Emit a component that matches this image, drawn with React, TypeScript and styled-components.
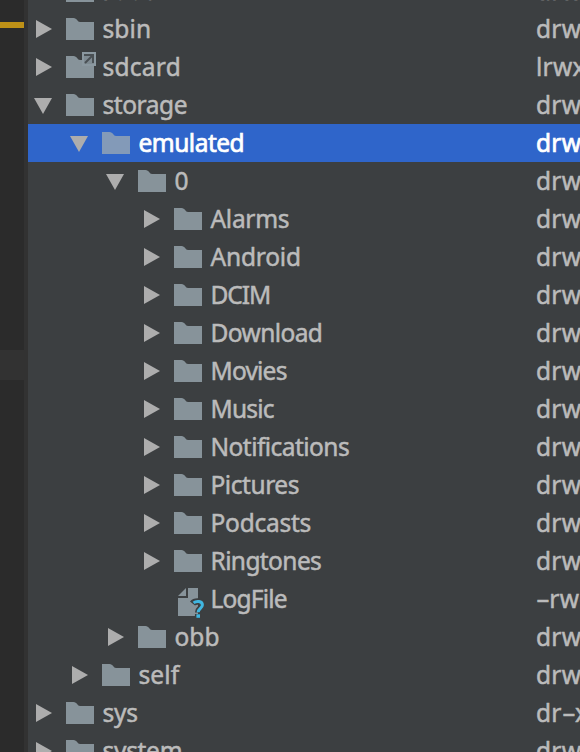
import React from 'react';
import styled, { createGlobalStyle } from 'styled-components';

const GlobalStyle = createGlobalStyle`
  html, body, #root { margin: 0; padding: 0; height: 100%; background: #3c3f41; }
  body { overflow: hidden; }
`;

const Window = styled.div`
  display: flex;
  width: 580px;
  height: 752px;
  overflow: hidden;
  background: #3c3f41;
  color: #bbbbbb;
  font: 400 24.5px/38px 'Noto Sans', 'Open Sans', sans-serif;
`;

const Gutter = styled.div`
  flex: none;
  display: flex;
  flex-direction: column;
  width: 24px;
  background: #2b2b2b;
  border-right: 4px solid #323232;
`;

const WarningMark = styled.div`
  height: 6px;
  margin-top: 22px;
  background: #be9117;
`;

const CaretLine = styled.div`
  height: 30px;
  margin-top: 322px;
  background: #323232;
`;

const Tree = styled.div`
  flex: 1;
  min-width: 0;
  margin-top: -28px;
`;

const Row = styled.div<{ $selected: boolean }>`
  display: grid;
  grid-template-columns: 508px 1fr;
  height: 38px;
  white-space: pre;
  overflow: hidden;
  background: ${(p) => (p.$selected ? '#2f65ca' : 'transparent')};
  color: ${(p) => (p.$selected ? '#ffffff' : '#bbbbbb')};
  -webkit-text-stroke: ${(p) => (p.$selected ? '0.7px' : '0.5px')} currentColor;
`;

const NameCell = styled.div<{ $level: number }>`
  display: flex;
  padding-left: ${(p) => 6 + p.$level * 36}px;
`;

const Toggle = styled.svg`
  flex: none;
  width: 18px;
  height: 38px;
  margin-right: 14px;
  fill: #adadad;
`;

const Icon = styled.svg<{ $selected?: boolean }>`
  flex: none;
  width: 32px;
  height: 38px;
  margin-right: 4.5px;
  fill: ${(p) => (p.$selected ? '#839ab8' : '#87939a')};
`;

const Label = styled.span<{ $spacing: number }>`
  letter-spacing: ${(p) => p.$spacing}px;
`;

const Permissions = styled.span`
  letter-spacing: 0.3px;
`;

const Dash = styled.span`
  display: inline-block;
  width: 13.3px;
  transform: scaleX(1.75);
  transform-origin: left;
`;

type Kind = 'folder' | 'link' | 'file';
type Entry = {
  name: string;
  level: number;
  perms: string;
  spacing?: number;
  open?: boolean;
  selected?: boolean;
  kind?: Kind;
};

const D = 'drwx';
const entries: Entry[] = [
  { name: 'root', level: 0, perms: D, spacing: 0.6 },
  { name: 'sbin', level: 0, perms: D, spacing: 0.1 },
  { name: 'sdcard', level: 0, perms: 'lrwx', kind: 'link', spacing: 0.25 },
  { name: 'storage', level: 0, perms: D, open: true, spacing: -0.45 },
  { name: 'emulated', level: 1, perms: D, open: true, selected: true, spacing: -0.5 },
  { name: '0', level: 2, perms: D, open: true },
  { name: 'Alarms', level: 3, perms: D, spacing: -0.3 },
  { name: 'Android', level: 3, perms: D, spacing: -0.2 },
  { name: 'DCIM', level: 3, perms: D, spacing: -1.05 },
  { name: 'Download', level: 3, perms: D, spacing: -0.6 },
  { name: 'Movies', level: 3, perms: D, spacing: -0.8 },
  { name: 'Music', level: 3, perms: D, spacing: -0.8 },
  { name: 'Notifications', level: 3, perms: D, spacing: -0.55 },
  { name: 'Pictures', level: 3, perms: D, spacing: -0.45 },
  { name: 'Podcasts', level: 3, perms: D, spacing: -0.25 },
  { name: 'Ringtones', level: 3, perms: D, spacing: -0.6 },
  { name: 'LogFile', level: 3, perms: '-rw-', kind: 'file', spacing: -0.8 },
  { name: 'obb', level: 2, perms: D },
  { name: 'self', level: 1, perms: D, spacing: 0.1 },
  { name: 'sys', level: 0, perms: 'dr-x', spacing: -0.2 },
  { name: 'system', level: 0, perms: D, spacing: -0.3 },
];

function EntryIcon({ kind, selected }: { kind: Kind; selected: boolean }) {
  if (kind === 'file') {
    return (
      <Icon viewBox="0 0 32 38">
        <path d="M4 16L12 8V16Z" />
        <path d="M14 8H24V36H4V18H14Z" />
        <path d="M18.5 23.5C21 20.5 28.5 20.5 28.5 25C28.5 28 24.2 28.5 24.2 32.5M24.2 34V38" fill="none" stroke="#3c3f41" strokeWidth="6.5" />
        <path d="M19.6 22.8C22 20.8 28.4 20.6 28.4 25C28.4 28.4 24.2 28.4 24.2 32.3" fill="none" stroke="#40b6e0" strokeWidth="3" />
        <path d="M22.4 34.3H26V37.8H22.4Z" fill="#40b6e0" />
      </Icon>
    );
  }
  return (
    <Icon viewBox="0 0 32 38" $selected={selected}>
      <path d="M0 8H7.5C11 8 11.5 12 14 12H28V30H0Z" />
      {kind === 'link' && (
        <>
          <path d="M16 4H30V18H16Z" fill="#8b98a0" />
          <path d="M18 6H28V16H18Z" fill="#7f8b92" />
          <path d="M18 7H27V15M27 7L19 15" fill="none" stroke="#4a5054" strokeWidth="2" />
        </>
      )}
    </Icon>
  );
}

function TreeRow({ entry }: { entry: Entry }) {
  const { name, level, perms, spacing = 0, open, selected = false, kind = 'folder' } = entry;
  return (
    <Row $selected={selected}>
      <NameCell $level={level}>
        <Toggle viewBox="0 0 18 38">
          {kind !== 'file' && <path d={open ? 'M0 12H18L9 28Z' : 'M2 10L18 19L2 28Z'} />}
        </Toggle>
        <EntryIcon kind={kind} selected={selected} />
        <Label $spacing={spacing}>{name}</Label>
      </NameCell>
      <Permissions>
        {perms.split(/(-)/).map((part, i) => (part === '-' ? <Dash key={i}>-</Dash> : part))}
      </Permissions>
    </Row>
  );
}

export default function App() {
  return (
    <>
      <GlobalStyle />
      <Window>
        <Gutter>
          <WarningMark />
          <CaretLine />
        </Gutter>
        <Tree>
          {entries.map((entry) => (
            <TreeRow key={entry.name} entry={entry} />
          ))}
        </Tree>
      </Window>
    </>
  );
}
